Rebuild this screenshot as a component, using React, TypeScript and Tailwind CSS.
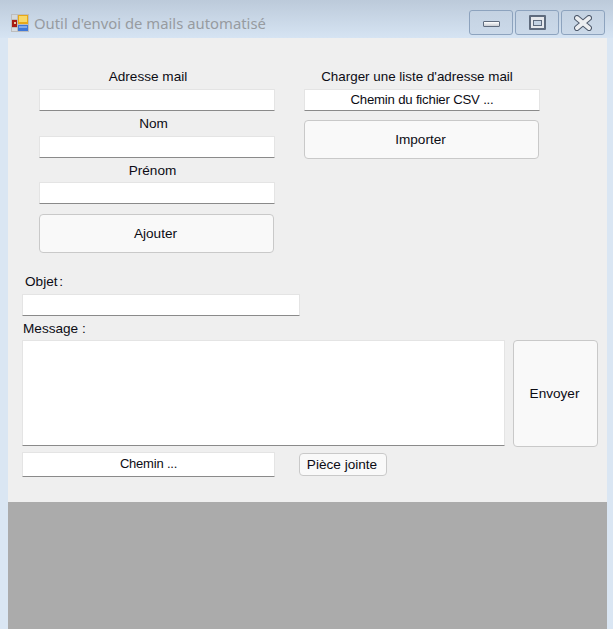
import React from 'react';

const TextBox = ({ className = '', children }: { className?: string; children?: React.ReactNode }) => (
  <div
    className={`flex items-center justify-center bg-white border border-[#e4e4e4] border-b-[#8a8a8a] rounded-[1px] ${className}`}
  >
    {children}
  </div>
);

const Btn = ({ className = '', children }: { className?: string; children: React.ReactNode }) => (
  <div
    className={`flex items-center justify-center bg-[#f9f9f9] border border-[#c9c9c9] rounded-[4px] pt-[1px] pr-[2px] ${className}`}
  >
    {children}
  </div>
);

const WinBtn = ({ children }: { children: React.ReactNode }) => (
  <div className="w-[44px] h-[25px] flex items-center justify-center border border-[#8da3be] rounded-[3px] bg-gradient-to-b from-[#c4d2e2] to-[#cbd9e9]">
    {children}
  </div>
);

export default function App() {
  return (
    <div
      className="w-[613px] h-[629px] flex flex-col bg-[#dae6f3] text-[13.6px] text-[#0c0c14] overflow-hidden"
      style={{ fontFamily: '"Liberation Sans", Arial, sans-serif' }}
    >
      {/* title bar */}
      <div className="h-[38px] shrink-0 flex items-start justify-between bg-gradient-to-b from-[#bccada] to-[#d6e4f3] pl-[11px] pr-[8px]">
        <div className="flex items-center mt-[13px] h-[20px]">
          <svg width="18" height="18" viewBox="0 0 18 18" className="mr-[5px]">
            <rect x="0" y="0" width="18" height="18" fill="#bdbdbd" />
            <rect x="1" y="1" width="5" height="4" fill="#d4d8dc" />
            <rect x="1" y="6" width="5" height="7" fill="#a81c14" />
            <rect x="3" y="8" width="2" height="2" fill="#e8c8a0" />
            <rect x="1" y="14" width="5" height="3" fill="#d8dce0" />
            <rect x="7" y="1" width="10" height="9" fill="#e8a818" />
            <rect x="8" y="2" width="8" height="6" fill="#f8d868" />
            <rect x="7" y="11" width="10" height="6" fill="#3f78d8" />
            <rect x="8" y="12" width="8" height="2" fill="#80a8e8" />
          </svg>
          <span
            className="text-[14.85px] leading-[20px] text-[#979ba0]"
            style={{ fontFamily: '"Noto Sans", sans-serif' }}
          >
            Outil d'envoi de mails automatisé
          </span>
        </div>
        <div className="flex gap-[2px] mt-[10px]">
          <WinBtn>
            <div className="w-[17px] h-[6px] mt-[3px] border border-[#5f6b7d] rounded-[1px] bg-gradient-to-b from-white to-[#c8ccd2]" />
          </WinBtn>
          <WinBtn>
            <div className="w-[17px] h-[15px] border-2 border-[#5f6b7d] rounded-[1px] flex items-center justify-center bg-[#e6e8ec]">
              <div className="w-[9px] h-[6px] border border-[#5f6b7d] bg-[#c5d3e3]" />
            </div>
          </WinBtn>
          <WinBtn>
            <svg width="18" height="16" viewBox="0 0 18 16">
              <path
                d="M3 3 L15 13 M15 3 L3 13"
                stroke="#4e5a6c"
                strokeWidth="6"
                strokeLinecap="round"
              />
              <path
                d="M3 3 L15 13 M15 3 L3 13"
                stroke="#eceef1"
                strokeWidth="4"
                strokeLinecap="round"
              />
            </svg>
          </WinBtn>
        </div>
      </div>

      {/* client area */}
      <div className="flex-1 flex flex-col ml-[8px] mr-[6px] min-h-0">
        <div className="h-[464px] shrink-0 bg-[#efefef] pt-[29px]">
          <div className="flex items-start h-[185px] ml-[31px]">
            <div className="w-[236px] flex flex-col">
              <div className="h-[18px] leading-[20px] text-center pr-[18px] mb-[4px]">Adresse mail</div>
              <TextBox className="h-[22px]" />
              <div className="h-[18px] leading-[20px] text-center pr-[7px] mt-[3px] mb-[4px]">Nom</div>
              <TextBox className="h-[22px]" />
              <div className="h-[18px] leading-[20px] text-center pr-[9px] mt-[3px] mb-[3px]">Prénom</div>
              <TextBox className="h-[22px]" />
              <Btn className="h-[39px] w-[235px] mt-[10px]">Ajouter</Btn>
            </div>
            <div className="w-[236px] flex flex-col ml-[29px]">
              <div className="h-[18px] leading-[20px] text-center text-[13.4px] pr-[10px] mb-[4px]">
                Charger une liste d'adresse mail
              </div>
              <TextBox className="h-[22px] text-[13.2px] tracking-[-0.2px]">Chemin du fichier CSV ...</TextBox>
              <Btn className="h-[39px] w-[235px] mt-[9px]">Importer</Btn>
            </div>
          </div>

          <div className="ml-[14px] mt-[20px]">
            <div className="h-[18px] leading-[20px] pl-[3px] mb-[4px] [word-spacing:-2px]">Objet :</div>
            <TextBox className="w-[278px] h-[22px]" />
            <div className="h-[18px] leading-[20px] pl-[1px] mt-[3px] mb-[3px]">Message :</div>
            <div className="flex items-start">
              <TextBox className="w-[483px] h-[106px]" />
              <Btn className="w-[85px] h-[107px] ml-[8px]">Envoyer</Btn>
            </div>
            <div className="flex items-start mt-[5px]">
              <TextBox className="w-[253px] h-[25px] pb-[1px] text-[13px] tracking-[-0.2px]">Chemin ...</TextBox>
              <Btn className="w-[88px] h-[23px] ml-[24px] mt-[1px]">Pièce jointe</Btn>
            </div>
          </div>
        </div>
        <div className="flex-1 bg-[#ababab]" />
      </div>
    </div>
  );
}
